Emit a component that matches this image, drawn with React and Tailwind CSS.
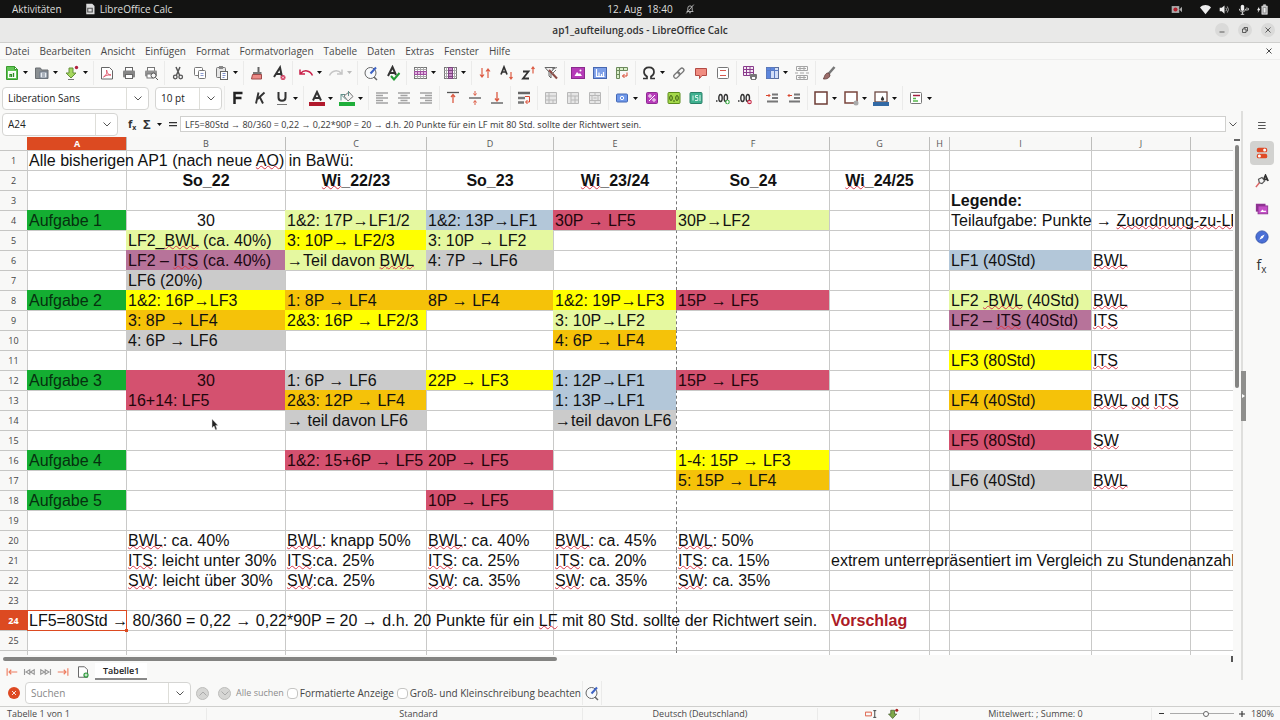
import { useState } from 'react'

const COLUMNS = ['A', 'B', 'C', 'D', 'E', 'F', 'G', 'H', 'I', 'J', '']

const FILLS = {
  green: 'bg-[#14ae32] border-[#14ae32] text-[#06300f]',
  lime: 'bg-[#e5f8a0] border-[#e5f8a0]',
  yellow: 'bg-[#ffff00] border-[#ffff00]',
  gold: 'bg-[#f5c209] border-[#f5c209]',
  gray: 'bg-[#cbcbcb] border-[#cbcbcb]',
  mauve: 'bg-[#b7739a] border-[#b7739a] text-[#1c0813]',
  blue: 'bg-[#b3c7d9] border-[#b3c7d9]',
  red: 'bg-[#d4516f] border-[#d4516f] text-[#22060c]',
}

// row -> column -> [text, fill, extra]; words between ~ are flagged by the spell checker
const CELLS = {
  1: { A: ['Alle bisherigen AP1 (nach neue ~AO~) in BaWü:'] },
  2: {
    B: ['So_22', null, 'head'],
    C: ['~Wi~_22/23', null, 'head'],
    D: ['So_23', null, 'head'],
    E: ['~Wi~_23/24', null, 'head'],
    F: ['So_24', null, 'head'],
    G: ['~Wi~_24/25', null, 'head'],
  },
  3: { I: ['Legende:', null, 'bold'] },
  4: {
    A: ['Aufgabe 1', 'green'],
    B: ['30', null, 'center'],
    C: ['1&2: 17P→LF1/2', 'lime'],
    D: ['1&2: 13P→LF1', 'blue'],
    E: ['30P → LF5', 'red'],
    F: ['30P→LF2', 'lime'],
    I: ['Teilaufgabe: Punkte → ~Zuordnung-zu-LF~'],
  },
  5: {
    B: ['LF2_~BWL~ (ca. 40%)', 'lime'],
    C: ['3: 10P→ LF2/3', 'yellow'],
    D: ['3: 10P → LF2', 'lime'],
  },
  6: {
    B: ['LF2 – ~ITS~ (ca. 40%)', 'mauve'],
    C: ['→Teil davon ~BWL~', 'lime'],
    D: ['4: 7P → LF6', 'gray'],
    I: ['LF1 (40Std)', 'blue'],
    J: ['~BWL~'],
  },
  7: { B: ['LF6 (20%)', 'gray'] },
  8: {
    A: ['Aufgabe 2', 'green'],
    B: ['1&2: 16P→LF3', 'yellow'],
    C: ['1: 8P → LF4', 'gold'],
    D: ['8P → LF4', 'gold'],
    E: ['1&2: 19P→LF3', 'yellow'],
    F: ['15P → LF5', 'red'],
    I: ['LF2 ~-BWL~ (40Std)', 'lime'],
    J: ['~BWL~'],
  },
  9: {
    B: ['3: 8P → LF4', 'gold'],
    C: ['2&3: 16P → LF2/3', 'yellow'],
    E: ['3: 10P→LF2', 'lime'],
    I: ['LF2 – ~ITS~ (40Std)', 'mauve'],
    J: ['~ITS~'],
  },
  10: { B: ['4: 6P → LF6', 'gray'], E: ['4: 6P → LF4', 'gold'] },
  11: { I: ['LF3 (80Std)', 'yellow'], J: ['~ITS~'] },
  12: {
    A: ['Aufgabe 3', 'green'],
    B: ['30', 'red', 'center'],
    C: ['1: 6P → LF6', 'gray'],
    D: ['22P → LF3', 'yellow'],
    E: ['1: 12P→LF1', 'blue'],
    F: ['15P → LF5', 'red'],
  },
  13: {
    B: ['16+14: LF5', 'red'],
    C: ['2&3: 12P → LF4', 'gold'],
    E: ['1: 13P→LF1', 'blue'],
    I: ['LF4 (40Std)', 'gold'],
    J: ['~BWL~ ~od~ ~ITS~'],
  },
  14: { C: ['→ teil davon LF6', 'gray'], E: ['→teil davon LF6', 'gray'] },
  15: { I: ['LF5 (80Std)', 'red'], J: ['~SW~'] },
  16: {
    A: ['Aufgabe 4', 'green'],
    C: ['1&2: 15+6P → LF5', 'red'],
    D: ['20P → LF5', 'red'],
    F: ['1-4: 15P → LF3', 'yellow'],
  },
  17: { F: ['5: 15P → LF4', 'gold'], I: ['LF6 (40Std)', 'gray'], J: ['~BWL~'] },
  18: { A: ['Aufgabe 5', 'green'], D: ['10P → LF5', 'red'] },
  20: {
    B: ['~BWL~: ca. 40%'],
    C: ['~BWL~: knapp 50%'],
    D: ['~BWL~: ca. 40%'],
    E: ['~BWL~: ca. 45%'],
    F: ['~BWL~: 50%'],
  },
  21: {
    B: ['~ITS~: leicht unter 30%'],
    C: ['~ITS~:ca. 25%'],
    D: ['~ITS~: ca. 25%'],
    E: ['~ITS~: ca. 20%'],
    F: ['~ITS~: ca. 15%'],
    G: ['extrem unterrepräsentiert im Vergleich zu Stundenanzahl'],
  },
  22: {
    B: ['~SW~: leicht über 30%'],
    C: ['~SW~:ca. 25%'],
    D: ['~SW~: ca. 35%'],
    E: ['~SW~: ca. 35%'],
    F: ['~SW~: ca. 35%'],
  },
  24: {
    A: ['LF5=80Std → 80/360 = 0,22 → 0,22*90P = 20 → d.h. 20 Punkte für ein ~LF~ mit 80 Std. sollte der Richtwert sein.'],
    G: ['Vorschlag', null, 'note'],
  },
}

const EXTRAS = {
  head: 'text-center font-bold',
  center: 'text-center',
  bold: 'font-bold',
  note: 'font-bold text-[#ab1a26]',
}

const FORMULA =
  'LF5=80Std → 80/360 = 0,22 → 0,22*90P = 20 → d.h. 20 Punkte für ein LF mit 80 Std. sollte der Richtwert sein.'

const Svg = ({ children, className = 'size-4' }) => (
  <svg viewBox="0 0 16 16" fill="none" className={`block shrink-0 ${className}`} aria-hidden="true">
    {children}
  </svg>
)

const lines = (d, stroke = '#9b9b9b', width = 2) => <path d={d} stroke={stroke} strokeWidth={width} />

const ICONS = {
  new: (
    <>
      <path d="M2.500 1.500h8l3 3v10h-11z" fill="#62c655" stroke="#3a9b2f" />
      <path d="M10.500 1.500v3h3z" fill="#fff" stroke="#3a9b2f" />
      <rect x="4.500" y="6.500" width="7" height="6" fill="#eefbe9" stroke="#fff" />
      <path d="M6 12V9.500h1.500V12M9.500 12V8" stroke="#2f8c28" strokeWidth="1.200" />
    </>
  ),
  open: (
    <>
      <path d="M1.500 3h5l1 2h6.500v8.500H1.500z" fill="#8a8f92" stroke="#6b6f72" />
      <rect x="6" y="7" width="7" height="6" fill="#e9edf2" stroke="#6b7785" />
      <path d="M8 9h3M8 11h3" stroke="#6b7785" />
    </>
  ),
  save: (
    <>
      <path d="M5 3h4v5h3l-5 5-5-5h3z" fill="#a5d75c" stroke="#64903a" />
      <path d="M4 14.500h6" stroke="#777" />
      <circle cx="12.500" cy="2.500" r="1.700" fill="#b0203f" />
    </>
  ),
  pdf: (
    <>
      <path d="M2.500 2.500h8l3 3v8.500h-11z" fill="#fff" stroke="#666" />
      <path d="M4.500 12c3-2 4-5 3-7 0 3 2 5 4.500 5-3-.5-5.500 .5-7.500 2z" stroke="#e0576c" />
    </>
  ),
  print: (
    <>
      <rect x="4.500" y="2.500" width="7" height="4" fill="#fff" stroke="#666" />
      <rect x="2" y="5.500" width="12" height="7" rx="1" fill="#858585" />
      <rect x="4.500" y="9.500" width="7" height="4" fill="#fff" stroke="#666" />
    </>
  ),
  preview: (
    <>
      <rect x="4.500" y="2.500" width="7" height="4" fill="#fff" stroke="#777" />
      <rect x="2" y="5.500" width="12" height="6" rx="1" fill="#929292" />
      <rect x="4" y="9" width="6" height="4" fill="#fff" stroke="#777" />
      <circle cx="10.500" cy="10.500" r="2.500" fill="#f4f4f4" stroke="#555" />
      <path d="M12.500 12.500l2.500 2.500" stroke="#555" />
    </>
  ),
  cut: (
    <>
      <path d="M6 2l3.500 8M10 2L6.500 10" stroke="#555" strokeWidth="1.500" />
      <circle cx="5.300" cy="12" r="1.800" stroke="#555" strokeWidth="1.300" />
      <circle cx="10.700" cy="12" r="1.800" stroke="#555" strokeWidth="1.300" />
    </>
  ),
  copy: (
    <>
      <rect x="2.500" y="2.500" width="8" height="8" rx="1" fill="#fff" stroke="#777" />
      <rect x="6.500" y="5.500" width="7" height="8" rx="1" fill="#fff" stroke="#777" />
      <path d="M8.500 8.500h3M8.500 10.500h3" stroke="#8b9bd0" />
    </>
  ),
  paste: (
    <>
      <rect x="2.500" y="2.500" width="9" height="10" rx="1" fill="#e6e6e6" stroke="#777" />
      <rect x="5" y="1" width="4" height="3" fill="#888" />
      <rect x="6.500" y="6.500" width="7" height="8" fill="#fff" stroke="#666" />
      <path d="M8.500 8.500h3M8.500 10.500h3M8.500 12.500h2" stroke="#7f8fc9" />
    </>
  ),
  clone: (
    <>
      <path d="M9.500 2v5" stroke="#666" strokeWidth="2" />
      <path d="M4 7h8.500v3H4z" fill="#777" />
      <path d="M3.500 9.500h9v4.500h-10z" fill="#ec8a86" stroke="#a04a4a" />
    </>
  ),
  clear: (
    <>
      <path d="M3 12L9 2.500 11 12M5 9h5" stroke="#333" strokeWidth="2" />
      <circle cx="12" cy="12.500" r="2.500" fill="#d23b5e" />
      <path d="M11 11.500l2 2M13 11.500l-2 2" stroke="#fff" strokeWidth=".8" />
    </>
  ),
  undo: <path d="M2 4.500v4.500h5M2.500 8.500C6 4.500 12 5 14.500 10.500" stroke="#c9214a" strokeWidth="1.500" />,
  redo: <path d="M14 4.500v4.500H9M13.500 8.500C10 4.500 4 5 1.500 10.500" stroke="#c6c6c6" strokeWidth="1.500" />,
  find: (
    <>
      <circle cx="7.500" cy="8" r="5.500" fill="#f8fafc" stroke="#666" />
      <path d="M11 12l3 3" stroke="#666" strokeWidth="1.500" />
      <path d="M7.500 8.500l5.500-6" stroke="#3d62c4" strokeWidth="2" />
    </>
  ),
  spell: (
    <>
      <path d="M3 11L7.500 2 11 10M5 8h5" stroke="#333" strokeWidth="2" />
      <path d="M6 11l3 3.500L14.500 8" stroke="#249c36" strokeWidth="2" />
    </>
  ),
  row: (
    <>
      <rect x="2.500" y="2.500" width="12" height="11" fill="#fff" stroke="#777" />
      <path d="M5.500 2.500v11M8.500 2.500v11M11.500 2.500v11M2.500 11.500h12M2.500 4.500h12" stroke="#aaa" />
      <path d="M2.500 6.500h12v3h-12zM5.500 6.500v3M8.500 6.500v3M11.500 6.500v3" fill="#e3b5e2" stroke="#a04fa0" />
    </>
  ),
  col: (
    <>
      <rect x="2.500" y="2.500" width="12" height="11" fill="#fff" stroke="#777" />
      <path d="M4.500 2.500v11M12.500 2.500v11M2.500 5.500h12M2.500 8.500h12M2.500 11.500h12" stroke="#aaa" />
      <path d="M6.500 2.500h4v11h-4zM6.500 5.500h4M6.500 8.500h4M6.500 11.500h4" fill="#c98bc9" stroke="#7d4580" />
    </>
  ),
  sort: (
    <path d="M5 3v9M3 9.500L5 12l2-2.500M11 13V4M9 6.500L11 4l2 2.500" stroke="#dc5b43" strokeWidth="1.200" />
  ),
  sortAsc: (
    <>
      <path d="M2 9.500L5 2l3 7.500M3 7h4" stroke="#333" strokeWidth="1.700" />
      <path d="M12 7v7M10.500 12l1.500 2 1.500-2" stroke="#dc5b43" strokeWidth="1.200" />
    </>
  ),
  sortDesc: (
    <>
      <path d="M2 6.500h5.500L2 13.500h6" stroke="#333" strokeWidth="1.800" />
      <path d="M12 8.500V2M10.500 4l1.500-2 1.500 2" stroke="#dc5b43" strokeWidth="1.200" />
    </>
  ),
  filter: (
    <>
      <path d="M2 2.500h10L8 7v6L6 11V7z" fill="#eee" stroke="#666" />
      <path d="M6 5l8 8.500" stroke="#8b4a44" strokeWidth="2" />
      <path d="M9 4l5-1.500M9 9l4-4" stroke="#777" />
    </>
  ),
  image: (
    <>
      <rect x="1.500" y="2.500" width="13" height="11" fill="#b63bb8" stroke="#8a2a8c" />
      <path d="M4.500 11l2.500-4 2 2 1-1 2 3z" fill="#fff" />
      <circle cx="10.500" cy="5.500" r="1" fill="#fff" />
    </>
  ),
  chart: (
    <>
      <rect x="1.500" y="2.500" width="13" height="11" fill="#7d9fe8" stroke="#4767b0" />
      <path d="M4.500 4v7.500h8M7 11V7.500M9.500 11V9M11.500 11V7" stroke="#fff" strokeWidth="1.200" />
    </>
  ),
  pivot: (
    <>
      <path d="M2.500 2.500h11v3h-8v8h-3z" fill="#d9efc8" stroke="#6d8a5c" />
      <path d="M5.500 2.500v3h-3M9.500 2.500v3M2.500 9.500h3" stroke="#6d8a5c" />
      <path d="M13 7.500v3.500H8.500M10.500 9l-2 2 2 2" stroke="#d9462e" />
    </>
  ),
  omega: (
    <path
      d="M2 13.500h4v-2C3.500 10 3 8.500 3 7c0-3 2-4.700 5-4.700S13 4 13 7c0 1.500-.5 3-3 4.500v2h4"
      stroke="#333"
      strokeWidth="1.700"
    />
  ),
  link: (
    <>
      <rect x="-3" y="-2" width="7" height="4" rx="2" transform="translate(5.500 10.500) rotate(-45)" stroke="#777" strokeWidth="1.300" />
      <rect x="-3" y="-2" width="7" height="4" rx="2" transform="translate(9.500 6.500) rotate(-45)" stroke="#777" strokeWidth="1.300" />
    </>
  ),
  comment: <path d="M2.500 3.500h11v7H9l-2.500 3v-3h-4z" fill="#f08c80" stroke="#b34a44" />,
  header: (
    <>
      <rect x="2.500" y="2.500" width="11" height="11" rx="1" fill="#fff" stroke="#777" />
      <path d="M5 5.500h6M5 10.500h6" stroke="#d8584d" />
    </>
  ),
  printArea: (
    <>
      <path d="M1.500 1.500h10v9h-10zM1.500 4.500h10M1.500 7.500h10M4.500 1.500v9M8 1.500v9" fill="#f5eaf5" stroke="#8a3c8c" />
      <rect x="8" y="9" width="7" height="5" rx="1" fill="#777" />
      <rect x="9.500" y="11.500" width="4" height="3" fill="#fff" stroke="#777" />
    </>
  ),
  freeze: (
    <>
      <rect x="2.500" y="2.500" width="12" height="11" fill="#d3dff7" stroke="#5b6f9c" />
      <path d="M2.500 2.500h8v3h-8zM2.500 2.500h4v11h-4z" fill="#5c86dd" />
      <path d="M2.500 5.500h12M6.500 2.500v11M10.500 2.500v11" stroke="#5b7cc4" />
    </>
  ),
  split: (
    <path
      d="M2.500 1.500h11v4h-11zM2.500 10.500h11v4h-11zM6 1.500v4M10 1.500v4M6 10.500v4M10 10.500v4M1 8h3M6 8h4M12 8h3M4 3.500h8M4 12.500h8"
      stroke="#a5a5a5"
    />
  ),
  draw: (
    <>
      <path d="M13.500 2L7 9.500" stroke="#777" strokeWidth="2.500" />
      <path d="M7.500 8c-3 0-3.500 2-5 6 3 0 6-.5 6.500-4z" fill="#9c6d6a" stroke="#6b4a48" />
    </>
  ),
  bold: <path d="M4.500 14V3h8M4.500 8h7" stroke="#222" strokeWidth="2.500" />,
  italic: <path d="M6.500 2.500L4 13.500M12.500 2.500L5.500 9M8 7.500l3 6" stroke="#333" strokeWidth="1.900" />,
  underline: (
    <>
      <path d="M4.500 2v5.500c0 2.300 1.200 3.300 3.500 3.300s3.500-1 3.500-3.300V2" stroke="#333" strokeWidth="2" />
      <path d="M3 14.500h10" stroke="#777" />
    </>
  ),
  fontColor: (
    <>
      <path d="M4 10.500L8 2l4 8.500M5.500 8h5" stroke="#333" strokeWidth="2" />
      <rect x="0" y="12" width="16" height="4" fill="#b11a2c" />
    </>
  ),
  fill: (
    <>
      <path d="M5 6l5-4 4 4.500-5 4.500z" fill="#f4f4f4" stroke="#777" />
      <path d="M9.500 6V1M2 10.500V4.500h4M2 4.500l5 5" stroke="#5f8f8a" />
      <rect x="0" y="12" width="16" height="4" fill="#1fae3a" />
    </>
  ),
  alignLeft: lines('M2 3h12M2 5.500h7M2 8h12M2 10.500h7M2 13h12', '#a2a2a2', 1.7),
  alignCenter: lines('M2 3h12M4.500 5.500h7M2 8h12M4.500 10.500h7M2 13h12', '#a2a2a2', 1.7),
  alignRight: lines('M2 3h12M7 5.500h7M2 8h12M7 10.500h7M2 13h12', '#a2a2a2', 1.7),
  top: (
    <>
      {lines('M2 2.500h12', '#555', 1.3)}
      <path d="M8 13V5M6 7l2-2.500L10 7" stroke="#dc5b43" strokeWidth="1.300" />
    </>
  ),
  middle: (
    <>
      {lines('M2 8h12', '#555', 1.3)}
      <path d="M8 1v4M6.500 3.500L8 5.500l1.500-2M8 15v-4M6.500 12.500L8 10.500l1.500 2" stroke="#dc5b43" />
    </>
  ),
  bottom: (
    <>
      {lines('M2 13h12', '#555', 1.3)}
      <path d="M8 2v8M6 8.500L8 11l2-2.500" stroke="#dc5b43" strokeWidth="1.300" />
    </>
  ),
  wrap: (
    <>
      {lines('M2 3h12', '#666', 2.5)}
      {lines('M2 8h7M2 12.500h6', '#777', 2.5)}
      <path d="M9 6.500h4.500V12H10M11.500 10L9.500 12l2 2" stroke="#d9462e" />
    </>
  ),
  merge: <path d="M2.500 2.500h11v11h-11zM6 2.500v11M2.500 6h11M2.500 10h3.500M10 10v3.500M6 10h7.500" fill="#e6e6e6" stroke="#b8b8b8" />,
  unmerge: <path d="M2.500 2.500h11v11h-11zM6 2.500v11M2.500 6h11M6 10h7.500M10 6v7" fill="#e6e6e6" stroke="#b8b8b8" />,
  mergeCenter: (
    <path
      d="M2.500 2.500h11v11h-11zM2.500 5.500h11M2.500 10.500h11M5 5.500v5M11 5.500v5M8 2.500v3M8 10.500v3M6.500 8h3"
      fill="#e6e6e6"
      stroke="#b8b8b8"
    />
  ),
  currency: (
    <>
      <rect x="2.500" y="4" width="11" height="8" rx="1" fill="#6f98ea" stroke="#4468b4" />
      <circle cx="8" cy="8" r="1.700" stroke="#fff" />
    </>
  ),
  percent: (
    <>
      <rect x="2.500" y="2.500" width="11" height="11" rx="1" fill="#b73cba" stroke="#8f2a92" />
      <path d="M11 5l-6 6" stroke="#fff" />
      <circle cx="6" cy="6" r="1.200" stroke="#fff" />
      <circle cx="10" cy="10" r="1.200" stroke="#fff" />
    </>
  ),
  number: (
    <>
      <rect x="2" y="2.500" width="12" height="11" rx="1" fill="#a4d84a" stroke="#5d8c1c" />
      <ellipse cx="5" cy="8" rx="1.300" ry="2.500" stroke="#3c5c14" />
      <ellipse cx="11" cy="8" rx="1.300" ry="2.500" stroke="#3c5c14" />
      <path d="M8 10v2" stroke="#3c5c14" />
    </>
  ),
  date: (
    <>
      <rect x="2" y="2.500" width="12" height="11" rx="1" fill="#3fb08f" stroke="#2a8068" />
      <path d="M5 5.500v5M10 5.500H7.500v2h2.300v3H7M12 5v6" stroke="#d9f3ea" />
    </>
  ),
  addDec: (
    <>
      <path d="M1 11h1.500" stroke="#333" strokeWidth="1.500" />
      <ellipse cx="5.500" cy="8" rx="1.700" ry="3.500" stroke="#333" strokeWidth="1.400" />
      <ellipse cx="10.800" cy="8" rx="1.700" ry="3.500" stroke="#333" strokeWidth="1.400" />
      <circle cx="12.500" cy="12" r="2.300" fill="#3aa845" />
      <path d="M12.500 10.500v3M11 12h3" stroke="#fff" />
    </>
  ),
  delDec: (
    <>
      <path d="M1 11h1.500" stroke="#333" strokeWidth="1.500" />
      <ellipse cx="5.500" cy="8" rx="1.700" ry="3.500" stroke="#333" strokeWidth="1.400" />
      <ellipse cx="10.800" cy="8" rx="1.700" ry="3.500" stroke="#333" strokeWidth="1.400" />
      <circle cx="12.500" cy="12" r="2.300" fill="#c72846" />
      <path d="M11.500 11l2 2M13.500 11l-2 2" stroke="#fff" />
    </>
  ),
  indent: (
    <>
      {lines('M8 4.500h6M8 8h6M3 11.500h11', '#777')}
      <path d="M2 5.500h4M4.500 4L6 5.500 4.500 7" stroke="#d9462e" />
    </>
  ),
  outdent: (
    <>
      {lines('M8 4.500h6M8 8h6M3 11.500h11', '#777')}
      <path d="M2 5.500h4M3.500 4L2 5.500 3.500 7" stroke="#d9462e" />
    </>
  ),
  border: <rect x="2" y="2" width="12" height="12" fill="#fff" stroke="#6e3d35" strokeWidth="1.500" />,
  borderStyle: (
    <>
      <rect x="2" y="2" width="12" height="11" fill="#fff" stroke="#7a453c" strokeWidth="1.500" />
      <circle cx="13" cy="13" r="2.500" fill="#aaa" />
    </>
  ),
  borderColor: (
    <>
      <rect x="2" y="2" width="12" height="10" fill="#fff" stroke="#6e4a42" strokeWidth="1.300" />
      <path d="M9.500 6l1.700 3a1.700 1.700 0 1 1-3.400 0z" fill="#333" />
      <rect x="0" y="12" width="16" height="4" fill="#336aa5" />
    </>
  ),
  conditional: (
    <>
      <rect x="2.500" y="2.500" width="11" height="11" rx="1" fill="#fff" stroke="#777" />
      <path d="M5 5.500h7" stroke="#a11c3e" strokeWidth="1.500" />
      <path d="M5 8.500h3M5 11h5" stroke="#58b84e" strokeWidth="1.300" />
    </>
  ),
}

// '|' draws a separator, 'v' a drop-down arrow and 'v-' a disabled one
const TOOLBAR_MAIN = [
  ['new', 'Neu'], 'v', ['open', 'Öffnen'], 'v', ['save', 'Speichern'], 'v', '|',
  ['pdf', 'Als PDF exportieren'], ['print', 'Drucken'], ['preview', 'Druckvorschau'], '|',
  ['cut', 'Ausschneiden'], ['copy', 'Kopieren'], ['paste', 'Einfügen'], 'v', '|',
  ['clone', 'Format übertragen'], ['clear', 'Direkte Formatierung löschen'], '|',
  ['undo', 'Rückgängig'], 'v', ['redo', 'Wiederherstellen'], 'v-', '|',
  ['find', 'Suchen und Ersetzen'], ['spell', 'Rechtschreibung'], '|',
  ['row', 'Zeile'], 'v', ['col', 'Spalte'], 'v', '|',
  ['sort', 'Sortieren'], ['sortAsc', 'Aufsteigend sortieren'], ['sortDesc', 'Absteigend sortieren'], ['filter', 'AutoFilter'], '|',
  ['image', 'Bild einfügen'], ['chart', 'Diagramm einfügen'], ['pivot', 'Pivot-Tabelle einfügen'], '|',
  ['omega', 'Sonderzeichen'], 'v', ['link', 'Hyperlink'], ['comment', 'Kommentar'], ['header', 'Kopf- und Fußzeilen'], '|',
  ['printArea', 'Druckbereich'], ['freeze', 'Zeilen und Spalten fixieren'], 'v', ['split', 'Fenster teilen'], '|',
  ['draw', 'Zeichnen'],
]

const TOOLBAR_FORMAT = [
  '|', ['bold', 'Fett'], ['italic', 'Kursiv'], ['underline', 'Unterstrichen'], 'v', '|',
  ['fontColor', 'Schriftfarbe'], 'v', ['fill', 'Hintergrundfarbe'], 'v', '|',
  ['alignLeft', 'Linksbündig'], ['alignCenter', 'Zentriert'], ['alignRight', 'Rechtsbündig'], '|',
  ['top', 'Oben ausrichten'], ['middle', 'Vertikal zentrieren'], ['bottom', 'Unten ausrichten'], '|',
  ['wrap', 'Automatischer Umbruch'], '|',
  ['merge', 'Verbinden und zentrieren'], ['unmerge', 'Zellen verbinden'], ['mergeCenter', 'Zellen teilen'], '|',
  ['currency', 'Währung'], 'v', ['percent', 'Prozent'], ['number', 'Zahl'], ['date', 'Datum'], '|',
  ['addDec', 'Dezimalstelle hinzufügen'], ['delDec', 'Dezimalstelle löschen'], '|',
  ['indent', 'Einzug erhöhen'], ['outdent', 'Einzug verringern'], '|',
  ['border', 'Umrandung'], 'v', ['borderStyle', 'Rahmenstil'], 'v', ['borderColor', 'Rahmenfarbe'], 'v', '|',
  ['conditional', 'Bedingte Formatierung'], 'v',
]

function ToolItems({ items }) {
  return items.map((item, i) => {
    if (item === '|') {
      return (
        <span key={i} className="flex h-6 w-[5px] shrink-0 justify-center">
          <span className="w-px bg-[#ebebea]" />
        </span>
      )
    }
    if (item === 'v' || item === 'v-') {
      return (
        <button key={i} type="button" aria-label="Weitere Optionen" className="flex h-6 w-2 shrink-0 items-center justify-start">
          <svg viewBox="0 0 5 3" className="h-[3px] w-[5px]" aria-hidden="true">
            <path d="M0 0h5L2.500 3z" fill={item === 'v' ? '#111' : '#bbb'} />
          </svg>
        </button>
      )
    }
    return (
      <button
        key={i}
        type="button"
        aria-label={item[1]}
        className="flex h-6 w-[22px] shrink-0 items-center justify-center rounded hover:bg-[#e6e6e4]"
      >
        <Svg>{ICONS[item[0]]}</Svg>
      </button>
    )
  })
}

const Chevron = ({ up, className = 'text-[#555]' }) => (
  <svg viewBox="0 0 8 5" className={`h-[5px] w-2 ${className}`} fill="none" stroke="currentColor" aria-hidden="true">
    <path d={up ? 'M.5 4.500L4 1l3.500 3.500' : 'M.5.500L4 4 7.500.500'} />
  </svg>
)

function TopBar() {
  return (
    <header className="grid h-[18px] shrink-0 grid-cols-3 items-center bg-[#131312] text-[10px] text-[#dededc]">
      <div className="flex items-center gap-[22px] pl-3">
        <button type="button">Aktivitäten</button>
        <button type="button" className="flex items-center gap-1">
          <Svg className="size-3">
            <path d="M3 1h8l3 3v11H3z" fill="#ddd" />
            <path d="M5 7h6v5H5z" stroke="#555" strokeWidth="1.500" />
          </Svg>
          LibreOffice Calc
        </button>
      </div>
      <div className="flex items-center justify-center gap-3 pl-[22px]">
        <span>12. Aug&nbsp; 18:40</span>
        <Svg className="size-[10px]">
          <path d="M3 12h10l-1.500-2V6.500a3.500 3.500 0 0 0-7 0V10zM6.500 14h3M2 15L14 1" stroke="#ccc" strokeWidth="1.300" />
        </Svg>
      </div>
      <div className="flex items-center justify-end gap-2 pr-3">
        <Svg className="mr-2.5 size-[11px]">
          <rect x="1" y="3" width="11" height="10" fill="#aaa" />
          <circle cx="6.500" cy="8" r="3" fill="#b3202c" />
          <path d="M12 8l4-4v8z" fill="#aaa" />
        </Svg>
        <Svg className="size-[11px]">
          <path d="M0 5c5-4.500 11-4.500 16 0L8 15z" fill="#eee" />
        </Svg>
        <Svg className="size-[11px]">
          <path d="M1 5.500h3L8 2v12l-4-3.500H1z" fill="#eee" />
          <path d="M10 5.500q2 2.500 0 5M12 3.500q3.500 4.500 0 9" stroke="#bbb" strokeWidth="1.300" />
        </Svg>
        <Svg className="size-[11px]">
          <rect x="4" y="1" width="5" height="9" rx="2.500" fill="#eee" />
          <path d="M2 7c0 6 9 6 9 0M6.500 11v4M4 15h5M13 5v5M15 6v3" stroke="#ddd" strokeWidth="1.300" />
        </Svg>
        <Svg className="size-[11px]">
          <path d="M3 4L0 9h2l-1 4 4-6H3z" fill="#eee" />
          <path d="M7 3h8v12H7zM9.500 1h3v2h-3z" stroke="#ccc" fill="#ccc" />
          <path d="M9 5h4v8H9z" fill="#eee" stroke="#777" />
        </Svg>
      </div>
    </header>
  )
}

const WINDOW_BUTTONS = [
  ['Minimieren', 'M3 12h10'],
  ['Wiederherstellen', 'M3 6h7v7H3zM6 6V3h7v7h-3'],
  ['Schließen', 'M3 3l10 10M13 3L3 13'],
]

function TitleBar() {
  return (
    <div className="relative flex h-[25px] shrink-0 items-center justify-center border-b border-[#cfcfcd] bg-[#e9e9e8]">
      <h1 className="text-[10px] font-semibold text-[#333]">ap1_aufteilung.ods - LibreOffice Calc</h1>
      <div className="absolute right-[5px] flex gap-[9px]">
        {WINDOW_BUTTONS.map(([label, d]) => (
          <button key={label} type="button" aria-label={label} className="flex size-3.5 items-center justify-center rounded-full bg-[#dadad9]">
            <Svg className="size-2">
              <path d={d} stroke="#444" strokeWidth="1.700" />
            </Svg>
          </button>
        ))}
      </div>
    </div>
  )
}

const MENUS = ['Datei', 'Bearbeiten', 'Ansicht', 'Einfügen', 'Format', 'Formatvorlagen', 'Tabelle', 'Daten', 'Extras', 'Fenster', 'Hilfe']

function MenuBar() {
  return (
    <nav className="flex h-[17px] shrink-0 items-center gap-2.5 border-b border-[#ededec] pl-[5px] pr-[7px] text-[10px] text-[#484848]">
      {MENUS.map((m) => (
        <button key={m} type="button">
          {m}
        </button>
      ))}
      <button type="button" aria-label="Dokument schließen" className="ml-auto">
        <Svg className="size-2">
          <path d="M3 3l10 10M13 3L3 13" stroke="#333" strokeWidth="1.800" />
        </Svg>
      </button>
    </nav>
  )
}

function Select({ label, options, className }) {
  return (
    <label className={`relative flex h-[23px] shrink-0 ${className}`}>
      <select
        aria-label={label}
        className="w-full appearance-none rounded border border-[#d5d5d3] bg-white pl-[5px] text-[10px] text-[#222]"
      >
        {options.map((o) => (
          <option key={o}>{o}</option>
        ))}
      </select>
      <span className="pointer-events-none absolute inset-y-px right-px flex w-[22px] items-center justify-center border-l border-[#deded9]">
        <Chevron />
      </span>
    </label>
  )
}

function FormulaBar() {
  const [formula, setFormula] = useState(FORMULA)
  return (
    <div className="flex h-[26px] shrink-0 items-center pl-0.5 pr-1">
      <div className="flex h-[23px] w-[116px] shrink-0 rounded border border-[#d5d5d3] bg-white">
        <input aria-label="Namenfeld" defaultValue="A24" className="w-0 grow pl-[5px] text-[10px] text-[#222] outline-none" />
        <button type="button" aria-label="Namen anzeigen" className="flex w-[22px] items-center justify-center border-l border-[#deded9]">
          <Chevron />
        </button>
      </div>
      <div className="flex w-[62px] shrink-0 items-center justify-between pl-[10px] pr-[3px] text-[#333]">
        <button type="button" aria-label="Funktionsassistent" className="text-[11px] font-bold leading-3">
          f<sub className="text-[7px]">x</sub>
        </button>
        <button type="button" aria-label="Summe" className="text-[13px] font-bold leading-3">
          Σ
        </button>
        <svg viewBox="0 0 5 3" className="h-[3px] w-[5px]" aria-hidden="true">
          <path d="M0 0h5L2.500 3z" fill="#111" />
        </svg>
        <button type="button" aria-label="Formel">
          <Svg className="size-2">
            <path d="M0 5h16M0 11h16" stroke="#333" strokeWidth="2.500" />
          </Svg>
        </button>
      </div>
      <input
        aria-label="Eingabezeile"
        value={formula}
        onChange={(e) => setFormula(e.target.value)}
        className="h-4 min-w-0 grow border border-[#d0d0ce] bg-white px-1 font-['Noto_Sans',sans-serif] text-[9px] text-[#444] outline-none"
      />
      <button type="button" aria-label="Eingabezeile erweitern" className="flex w-[11px] shrink-0 justify-end">
        <Chevron />
      </button>
    </div>
  )
}

function CellText({ text }) {
  return text.split('~').map((part, i) =>
    i % 2 ? (
      <span key={i} className="underline decoration-[#d8384a] decoration-wavy decoration-1 -underline-offset-1 [text-decoration-skip-ink:none]">
        {part}
      </span>
    ) : (
      part
    )
  )
}

function Sheet() {
  const rows = Array.from({ length: 26 }, (_, i) => i + 1)
  return (
    <div className="relative min-h-0 grow overflow-hidden bg-white">
      <table className="w-full table-fixed border-separate border-spacing-0">
        <colgroup>
          <col className="w-[27px]" />
          <col className="w-[99px]" />
          <col className="w-[159px]" />
          <col className="w-[141px]" />
          <col className="w-[127px]" />
          <col className="w-[123px]" />
          <col className="w-[153px]" />
          <col className="w-[100px]" />
          <col className="w-[20px]" />
          <col className="w-[142px]" />
          <col className="w-[99px]" />
          <col />
        </colgroup>
        <thead>
          <tr className="h-[13px] bg-[#f8f8f7] text-[9px] leading-[13px] text-[#555]">
            <td className="p-0" />
            {COLUMNS.map((c, i) => (
              <th
                key={i}
                className={
                  c === 'A'
                    ? 'border-l border-[#dc4a21] bg-[#dc4a21] p-0 font-bold text-white'
                    : 'border-l border-[#bdbdbb] p-0 font-normal'
                }
              >
                {c}
              </th>
            ))}
          </tr>
        </thead>
        <tbody className="font-['Liberation_Sans',Arial,sans-serif] text-base leading-[19px] text-[#111]">
          {rows.map((row) => (
            <tr key={row} className="h-5">
              <th
                className={`border-t p-0 font-['Open_Sans',sans-serif] text-[9px] ${
                  row === 24
                    ? 'border-[#dc4a21] bg-[#dc4a21] font-bold text-white'
                    : 'border-[#c6c6c4] bg-[#f8f8f7] font-normal text-[#444]'
                }`}
              >
                {row < 26 && row}
              </th>
              {COLUMNS.map((c, i) => {
                const [text, fill, extra] = CELLS[row]?.[c] || []
                const dashed = c === 'F' && !fill ? 'border-l-[#777] [border-left-style:dashed]' : ''
                return (
                  <td
                    key={i}
                    className={`h-5 whitespace-nowrap border-l border-t p-0 ${text && !extra?.match(/head|center/) ? 'pl-px' : ''} ${
                      fill ? FILLS[fill] : 'border-[#c9c9c8]'
                    } ${dashed} ${extra ? EXTRAS[extra] : ''} ${row === 24 && c === 'A' ? 'relative' : ''}`}
                  >
                    {text && <CellText text={text} />}
                    {row === 24 && c === 'A' && (
                      <span className="pointer-events-none absolute -inset-px border border-[#dc4a21]">
                        <span className="absolute -bottom-0.5 -right-0.5 size-[3px] bg-[#dc4a21]" />
                      </span>
                    )}
                  </td>
                )
              })}
            </tr>
          ))}
        </tbody>
      </table>
      {/* mouse pointer */}
      <svg viewBox="0 0 8 13" className="absolute left-[211px] top-[281px] h-[13px] w-2" aria-hidden="true">
        <path d="M1 1v9l2-2 1.500 4 1.500-.700L4.700 7.500H7z" fill="#222" stroke="#ddd" strokeWidth=".5" />
      </svg>
    </div>
  )
}

const SHEET_NAV = [
  ['Erste Tabelle', 'M1.500 3v10M15 8H4M7 5L4 8l3 3', '#ee7d60'],
  ['Vorherige Tabelle', 'M2 4v8M9 5L4 8l5 3zM15 5l-5 3 5 3z', '#999'],
  ['Nächste Tabelle', 'M14 4v8M7 5l5 3-5 3zM1 5l5 3-5 3z', '#999'],
  ['Letzte Tabelle', 'M14.500 3v10M1 8h11M9 5l3 3-3 3', '#ee7d60'],
]

function SheetTabs() {
  return (
    <div className="flex h-[17px] shrink-0 items-center pl-[6px]">
      <div className="flex gap-[5px]">
        {SHEET_NAV.map(([label, d, color]) => (
          <button key={label} type="button" aria-label={label}>
            <Svg className="size-3">
              <path d={d} stroke={color} strokeWidth="1.500" />
            </Svg>
          </button>
        ))}
      </div>
      <button type="button" aria-label="Tabelle hinzufügen" className="ml-2 mr-1.5">
        <Svg className="size-3">
          <path d="M2 1h8l4 4v10H2z" fill="#fff" stroke="#666" strokeWidth="1.300" />
          <circle cx="12" cy="12" r="3.500" fill="#2c9a3a" />
          <path d="M12 10v4M10 12h4" stroke="#fff" strokeWidth="1.300" />
        </Svg>
      </button>
      <button type="button" className="h-full border-b-2 border-[#888] bg-white px-2 text-[9px] font-semibold text-[#222]">
        Tabelle1
      </button>
    </div>
  )
}

function Sidebar() {
  return (
    <aside className="relative flex w-[39px] shrink-0 flex-col items-center border-l-2 border-[#dfdfdd] pt-0.5">
      <span className="absolute -left-0.5 top-[260px] flex h-[50px] w-[5px] items-center justify-center bg-[#8f8f8d]">
        <span className="border-y-2 border-l-[3px] border-y-transparent border-l-white" />
      </span>
      <button type="button" aria-label="Seitenleisteneinstellungen" className="flex size-6 items-center justify-center">
        <Svg className="size-[11px]">
          <path d="M3 3.500h11M3 8h11M3 12.500h11" stroke="#555" strokeWidth="1.500" />
        </Svg>
      </button>
      <div className="mt-1 flex flex-col gap-1">
        <button type="button" aria-label="Eigenschaften" className="flex size-6 items-center justify-center rounded bg-[#d2d2d0]">
          <Svg className="size-3">
            <rect x="1" y="1" width="14" height="6" rx="2.500" fill="#e04a26" />
            <rect x="1" y="9" width="14" height="6" rx="2.500" fill="#e04a26" />
            <circle cx="11.500" cy="4" r="2" fill="#fff" />
            <circle cx="4.500" cy="12" r="2" fill="#fff" />
          </Svg>
        </button>
        <button type="button" aria-label="Formatvorlagen" className="flex size-6 items-center justify-center">
          <Svg className="size-3.5">
            <path d="M9 8l3-6.500L15 8M10 6h4" stroke="#333" strokeWidth="2" />
            <path d="M4 6l4-2 3 4-3 3-3-1z" fill="#f4f4f4" stroke="#555" strokeWidth="1.300" />
            <path d="M1 15l4-5" stroke="#dd6666" strokeWidth="1.700" />
          </Svg>
        </button>
        <button type="button" aria-label="Galerie" className="flex size-6 items-center justify-center">
          <Svg className="size-3.5">
            <rect x="1" y="2" width="11" height="9" fill="#8e3391" />
            <rect x="3.500" y="4.500" width="11" height="9" fill="#c550c8" stroke="#8e3391" />
            <path d="M6 11.500l2.500-3 2 2 1-1 1.500 2z" fill="#fff" />
          </Svg>
        </button>
        <button type="button" aria-label="Navigator" className="flex size-6 items-center justify-center">
          <Svg className="size-3.5">
            <circle cx="8" cy="8" r="7" fill="#4a6fd6" stroke="#3252a8" />
            <path d="M11 5L9 9l-4 2 2-4z" fill="#fff" />
          </Svg>
        </button>
        <button type="button" aria-label="Funktionen" className="h-6 text-[14px] leading-6 text-[#333]">
          f<sub className="text-[10px]">x</sub>
        </button>
      </div>
    </aside>
  )
}

function FindBar() {
  return (
    <form className="flex h-[26px] shrink-0 items-center pl-2 text-[10px] text-[#444]" onSubmit={(e) => e.preventDefault()}>
      <button type="button" aria-label="Suchleiste schließen" className="flex size-3 items-center justify-center rounded-full bg-[#dd4922]">
        <Svg className="size-2">
          <path d="M4 4l8 8M12 4l-8 8" stroke="#fff" strokeWidth="1.700" />
        </Svg>
      </button>
      <div className="ml-[5px] flex h-[22px] w-[166px] rounded border border-[#d5d5d3] bg-white">
        <input aria-label="Suchen" placeholder="Suchen" className="w-0 grow pl-[5px] outline-none placeholder:text-[#888]" />
        <button type="button" aria-label="Suchverlauf" className="flex w-[22px] items-center justify-center border-l border-[#deded9]">
          <Chevron />
        </button>
      </div>
      <button type="button" aria-label="Vorheriges" className="ml-[5px] flex size-[13px] items-center justify-center rounded-full border border-[#bdbdbb] bg-[#d6d6d4]">
        <Chevron up className="text-[#aaa]" />
      </button>
      <button type="button" aria-label="Nächstes" className="ml-[9px] flex size-[13px] items-center justify-center rounded-full border border-[#bdbdbb] bg-[#d6d6d4]">
        <Chevron className="text-[#aaa]" />
      </button>
      <button type="button" className="ml-[5px] text-[9px] text-[#8c8c8c]">
        Alle suchen
      </button>
      <label className="ml-[3px] flex items-center gap-0.5">
        <input type="checkbox" className="size-[11px] appearance-none rounded-sm border border-[#c5c5c3] bg-white" />
        Formatierte Anzeige
      </label>
      <label className="ml-[3px] flex items-center gap-0.5">
        <input type="checkbox" className="size-[11px] appearance-none rounded-sm border border-[#c5c5c3] bg-white" />
        Groß- und Kleinschreibung beachten
      </label>
      <span className="ml-px h-6 w-px bg-[#ebebea]" />
      <button type="button" aria-label="Suchen und Ersetzen" className="mx-px">
        <Svg>{ICONS.find}</Svg>
      </button>
      <span className="h-6 w-px bg-[#ebebea]" />
    </form>
  )
}

function StatusBar() {
  const [zoom, setZoom] = useState(180)
  return (
    <footer className="flex h-[14px] shrink-0 items-center border-t border-[#cfcfcd] text-[9px] leading-3 text-[#484848]">
      <span className="w-[207px] border-r border-[#ebebea] pl-[7px]">Tabelle 1 von 1</span>
      <span className="grow basis-0 border-r border-[#ebebea] pl-12 text-center">Standard</span>
      <span className="w-[235px] border-r border-[#ebebea] text-center">Deutsch (Deutschland)</span>
      <span className="flex w-[102px] justify-end gap-2.5 border-r border-[#ebebea] pr-5">
        <Svg className="size-3">
          <path d="M.500 5.500h8v5h-8z" stroke="#dc5b43" strokeWidth="1.300" />
          <path d="M11 3.500h4M13 3.500v9M11 12.500h4" stroke="#444" strokeWidth="1.300" />
        </Svg>
        <Svg className="size-3">
          <path d="M5 3h5v5h3l-5.500 6L2 8h3z" fill="#7fa84a" stroke="#4a5f30" />
          <circle cx="13" cy="3" r="2" fill="#a22" />
        </Svg>
      </span>
      <span className="w-[232px] border-r border-[#ebebea] text-center">Mittelwert: ; Summe: 0</span>
      <div className="flex w-[128px] items-center justify-between pl-[7px] pr-[6px]">
        <button type="button" aria-label="Verkleinern" className="h-px w-[5px] bg-[#333]" />
        <input
          type="range"
          aria-label="Maßstab"
          min="20"
          max="300"
          value={zoom}
          onChange={(e) => setZoom(Number(e.target.value))}
          className="h-2 w-16 appearance-none bg-transparent bg-[linear-gradient(#aaa,#aaa)] bg-[length:100%_1px] bg-center bg-no-repeat [&::-webkit-slider-thumb]:size-1.5 [&::-webkit-slider-thumb]:appearance-none [&::-webkit-slider-thumb]:rounded-full [&::-webkit-slider-thumb]:border [&::-webkit-slider-thumb]:border-[#666] [&::-webkit-slider-thumb]:bg-white"
        />
        <button type="button" aria-label="Vergrößern">
          <Svg className="size-1.5">
            <path d="M8 0v16M0 8h16" stroke="#333" strokeWidth="3" />
          </Svg>
        </button>
        <span>{zoom}%</span>
      </div>
    </footer>
  )
}

export default function App() {
  return (
    <div className="flex h-screen flex-col overflow-hidden bg-[#f9f9f8] font-['Open_Sans','Noto_Sans',sans-serif]">
      <TopBar />
      <TitleBar />
      <MenuBar />
      <div role="toolbar" aria-label="Standard" className="flex h-[25px] shrink-0 items-center pl-px">
        <ToolItems items={TOOLBAR_MAIN} />
      </div>
      <div role="toolbar" aria-label="Formatierung" className="flex h-[26px] shrink-0 items-center pl-0.5">
        <Select label="Schriftname" options={['Liberation Sans', 'Liberation Serif', 'Liberation Mono']} className="mr-1.5 w-[147px]" />
        <Select label="Schriftgröße" options={['10 pt', '12 pt', '14 pt']} className="w-[67px]" />
        <ToolItems items={TOOLBAR_FORMAT} />
      </div>
      <div className="flex min-h-0 grow">
        <main className="flex min-w-0 grow flex-col">
          <FormulaBar />
          <div className="flex min-h-0 grow">
            <Sheet />
            <div className="flex w-2 shrink-0 flex-col items-center pt-0.5">
              <span className="h-0.5 w-1.5 bg-[#666]" />
              <span className="mt-1 h-[47%] w-1 rounded-full bg-[#848482]" />
            </div>
          </div>
          <div className="flex h-2 shrink-0 items-center justify-between pl-[3px] pr-2">
            <span className="h-1 w-[45%] rounded-full bg-[#848482]" />
            <span className="h-1.5 w-0.5 bg-[#555]" />
          </div>
          <SheetTabs />
        </main>
        <Sidebar />
      </div>
      <FindBar />
      <StatusBar />
    </div>
  )
}
